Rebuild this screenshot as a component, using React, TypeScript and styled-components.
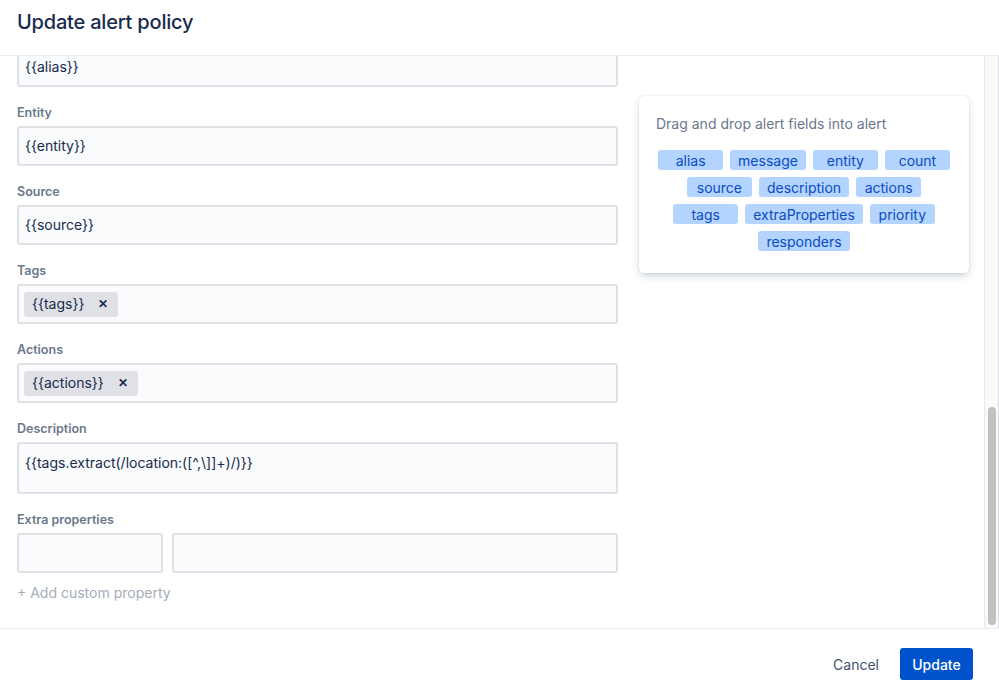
import React from "react";
import styled, { createGlobalStyle } from "styled-components";

const GlobalStyle = createGlobalStyle`
  html, body {
    margin: 0;
    padding: 0;
    background: #ffffff;
  }
  body {
    font-family: Inter, "Liberation Sans", sans-serif;
    color: #172b4d;
  }
`;

const Modal = styled.div`
  display: flex;
  flex-direction: column;
  width: 999px;
  height: 684px;
  overflow: hidden;
  background: #ffffff;
`;

const Header = styled.div`
  display: flex;
  align-items: center;
  box-sizing: border-box;
  height: 56px;
  padding: 0 17px 12px;
  border-bottom: 1px solid #ebecf0;
  flex-shrink: 0;
`;

const Title = styled.h1`
  margin: 0;
  font-size: 20px;
  font-weight: 500;
  color: #172b4d;
  letter-spacing: -0.2px;
`;

const Body = styled.div`
  display: flex;
  height: 572px;
  flex-shrink: 0;
  border-bottom: 1px solid #ebecf0;
`;

const Content = styled.div`
  flex: 1;
  display: flex;
  overflow: hidden;
`;

const FormColumn = styled.div`
  display: flex;
  flex-direction: column;
  width: 601px;
  margin-left: 17px;
  margin-top: -9px;
`;

const Field = styled.div`
  display: flex;
  flex-direction: column;
  margin-bottom: 18px;
`;

const Label = styled.div`
  font-size: 12.5px;
  line-height: 16px;
  font-weight: 600;
  color: #6b778c;
  margin-bottom: 5px;
`;

const Input = styled.div<{ $tall?: boolean }>`
  display: flex;
  align-items: ${(p) => (p.$tall ? "flex-start" : "center")};
  box-sizing: border-box;
  height: ${(p) => (p.$tall ? "52px" : "40px")};
  padding: ${(p) => (p.$tall ? "9px 6px" : "0 6px")};
  background: #fafbfc;
  border: 2px solid #dfe1e6;
  border-radius: 3px;
  font-size: 14px;
  line-height: 20px;
  color: #172b4d;
`;

const TagInput = styled(Input)`
  padding: 0 5px;
`;

const Tag = styled.span`
  display: inline-flex;
  align-items: center;
  height: 25px;
  padding: 0 8px;
  gap: 12px;
  background: #dfe1e6;
  border-radius: 3px;
  font-size: 14px;
  color: #172b4d;
`;

const TagRemove = styled.span`
  font-size: 12px;
  font-weight: 700;
  color: #172b4d;
  padding: 0 2px;
`;

const PairRow = styled.div`
  display: flex;
  gap: 9px;
`;

const KeyInput = styled(Input)`
  width: 146px;
`;

const ValueInput = styled(Input)`
  flex: 1;
`;

const AddLink = styled.div`
  margin-top: -6px;
  font-size: 14px;
  line-height: 16px;
  color: #a5adba;
`;

const SideColumn = styled.div`
  margin-left: 21px;
  padding-top: 40px;
`;

const FieldsCard = styled.div`
  width: 330px;
  box-sizing: border-box;
  padding: 20px 16px 22px;
  background: #ffffff;
  border-radius: 4px;
  box-shadow: 0 4px 8px -2px rgba(9, 30, 66, 0.25), 0 0 1px rgba(9, 30, 66, 0.31);
`;

const CardTitle = styled.div`
  font-size: 14px;
  line-height: 16px;
  color: #6b778c;
  margin-left: 1px;
  margin-bottom: 18px;
`;

const ChipWrap = styled.div`
  display: flex;
  flex-wrap: wrap;
  justify-content: center;
  gap: 7px;
`;

const FieldChip = styled.span`
  display: inline-flex;
  align-items: center;
  justify-content: center;
  min-width: 65px;
  height: 20px;
  box-sizing: border-box;
  padding: 0 8px;
  background: #b3d4ff;
  border-radius: 3px;
  font-size: 14px;
  color: #0a4bbf;
`;

const ScrollTrack = styled.div`
  width: 15px;
  flex-shrink: 0;
  background: #fafafa;
  border-left: 1px solid #e8e8e8;
  border-right: 1px solid #d8dadf;
  padding-top: 351px;
  box-sizing: border-box;
  display: flex;
  justify-content: center;
`;

const ScrollThumb = styled.div`
  width: 8px;
  height: 218px;
  border-radius: 4px;
  background: #c1c1c1;
`;

const Footer = styled.div`
  display: flex;
  justify-content: flex-end;
  align-items: flex-start;
  gap: 9px;
  padding: 19px 26px 0 0;
`;

const Button = styled.button<{ $primary?: boolean }>`
  height: 32px;
  padding: 0 12px;
  border: none;
  border-radius: 3px;
  font-family: inherit;
  font-size: 14px;
  font-weight: ${(p) => (p.$primary ? 500 : 400)};
  background: ${(p) => (p.$primary ? "#0052cc" : "transparent")};
  color: ${(p) => (p.$primary ? "#ffffff" : "#42526e")};
  cursor: pointer;
  min-width: ${(p) => (p.$primary ? "73px" : "auto")};
`;

const alertFields = [
  "alias",
  "message",
  "entity",
  "count",
  "source",
  "description",
  "actions",
  "tags",
  "extraProperties",
  "priority",
  "responders",
];

const App = () => {
  return (
    <Modal>
      <GlobalStyle />
      <Header>
        <Title>Update alert policy</Title>
      </Header>
      <Body>
        <Content>
          <FormColumn>
            <Field>
              <Input>{"{{alias}}"}</Input>
            </Field>
            <Field>
              <Label>Entity</Label>
              <Input>{"{{entity}}"}</Input>
            </Field>
            <Field>
              <Label>Source</Label>
              <Input>{"{{source}}"}</Input>
            </Field>
            <Field>
              <Label>Tags</Label>
              <TagInput>
                <Tag>
                  {"{{tags}}"}
                  <TagRemove>✕</TagRemove>
                </Tag>
              </TagInput>
            </Field>
            <Field>
              <Label>Actions</Label>
              <TagInput>
                <Tag>
                  {"{{actions}}"}
                  <TagRemove>✕</TagRemove>
                </Tag>
              </TagInput>
            </Field>
            <Field>
              <Label>Description</Label>
              <Input $tall>{"{{tags.extract(/location:([^,\\]]+)/)}}"}</Input>
            </Field>
            <Field>
              <Label>Extra properties</Label>
              <PairRow>
                <KeyInput />
                <ValueInput />
              </PairRow>
            </Field>
            <AddLink>+ Add custom property</AddLink>
          </FormColumn>
          <SideColumn>
            <FieldsCard>
              <CardTitle>Drag and drop alert fields into alert</CardTitle>
              <ChipWrap>
                {alertFields.map((f) => (
                  <FieldChip key={f}>{f}</FieldChip>
                ))}
              </ChipWrap>
            </FieldsCard>
          </SideColumn>
        </Content>
        <ScrollTrack>
          <ScrollThumb />
        </ScrollTrack>
      </Body>
      <Footer>
        <Button>Cancel</Button>
        <Button $primary>Update</Button>
      </Footer>
    </Modal>
  );
};

export default App;
